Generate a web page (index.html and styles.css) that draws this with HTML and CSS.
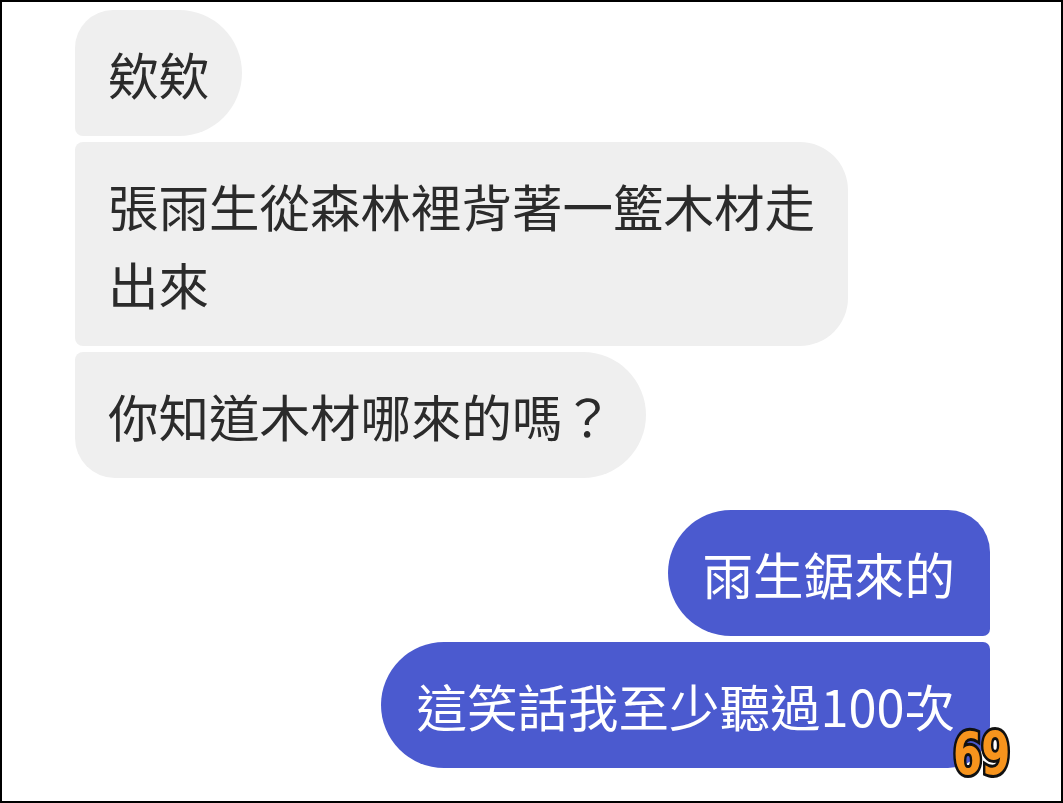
FILE: index.html
```html
<!DOCTYPE html>
<html lang="zh-Hant">
<head>
    <meta charset="UTF-8">
    <meta name="viewport" content="width=device-width, initial-scale=1.0">
    <title>雨生鋸來的</title>
    <link rel="stylesheet" href="styles.css">
</head>
<body>
    <div class="frame">
        <div class="group incoming">
            <div class="bubble first">欸欸</div>
            <div class="bubble middle">張雨生從森林裡背著一籃木材走<br>出來</div>
            <div class="bubble last">你知道木材哪來的嗎？</div>
        </div>
        <div class="group outgoing">
            <div class="bubble first">雨生鋸來的</div>
            <div class="bubble last">這笑話我至少聽過100次</div>
        </div>
        <span class="badge">69</span>
    </div>
</body>
</html>
```

FILE: styles.css
```css
body {
    margin: 0;
    background-color: #fff;
    font-family: "Noto Sans CJK TC", "Noto Sans", sans-serif;
}
.frame {
    position: relative;
    box-sizing: border-box;
    width: 1063px;
    height: 803px;
    border: 2px solid #000;
    padding: 8px 71px 0 73px;
    display: flex;
    flex-direction: column;
    gap: 32px;
}
.group {
    display: flex;
    flex-direction: column;
    gap: 6px;
}
.incoming {
    align-items: flex-start;
}
.outgoing {
    align-items: flex-end;
}
.bubble {
    padding: 24px 33px;
    font-size: 50.5px;
    line-height: 78px;
    white-space: nowrap;
}
.incoming .bubble {
    background-color: #efefef;
    color: #2b2b2b;
}
.outgoing .bubble {
    background-color: #4b5acf;
    color: #fff;
    padding: 24px 35px;
}

/* grouped corners */
.incoming .first {
    border-radius: 38px 63px 63px 8px;
}
.incoming .middle {
    border-radius: 8px 48px 48px 8px;
}
.incoming .last {
    border-radius: 8px 63px 63px 40px;
}
.outgoing .first {
    border-radius: 63px 42px 7px 63px;
}
.outgoing .last {
    border-radius: 63px 7px 42px 63px;
}

.badge {
    position: absolute;
    left: 951px;
    top: 718px;
    font-family: "Liberation Sans Narrow", "DejaVu Sans Condensed", sans-serif;
    font-weight: bold;
    font-size: 58px;
    letter-spacing: -1px;
    color: #f7941d;
    -webkit-text-stroke: 6px #111;
    paint-order: stroke fill;
    transform: scaleX(0.8);
    transform-origin: left top;
}
```
